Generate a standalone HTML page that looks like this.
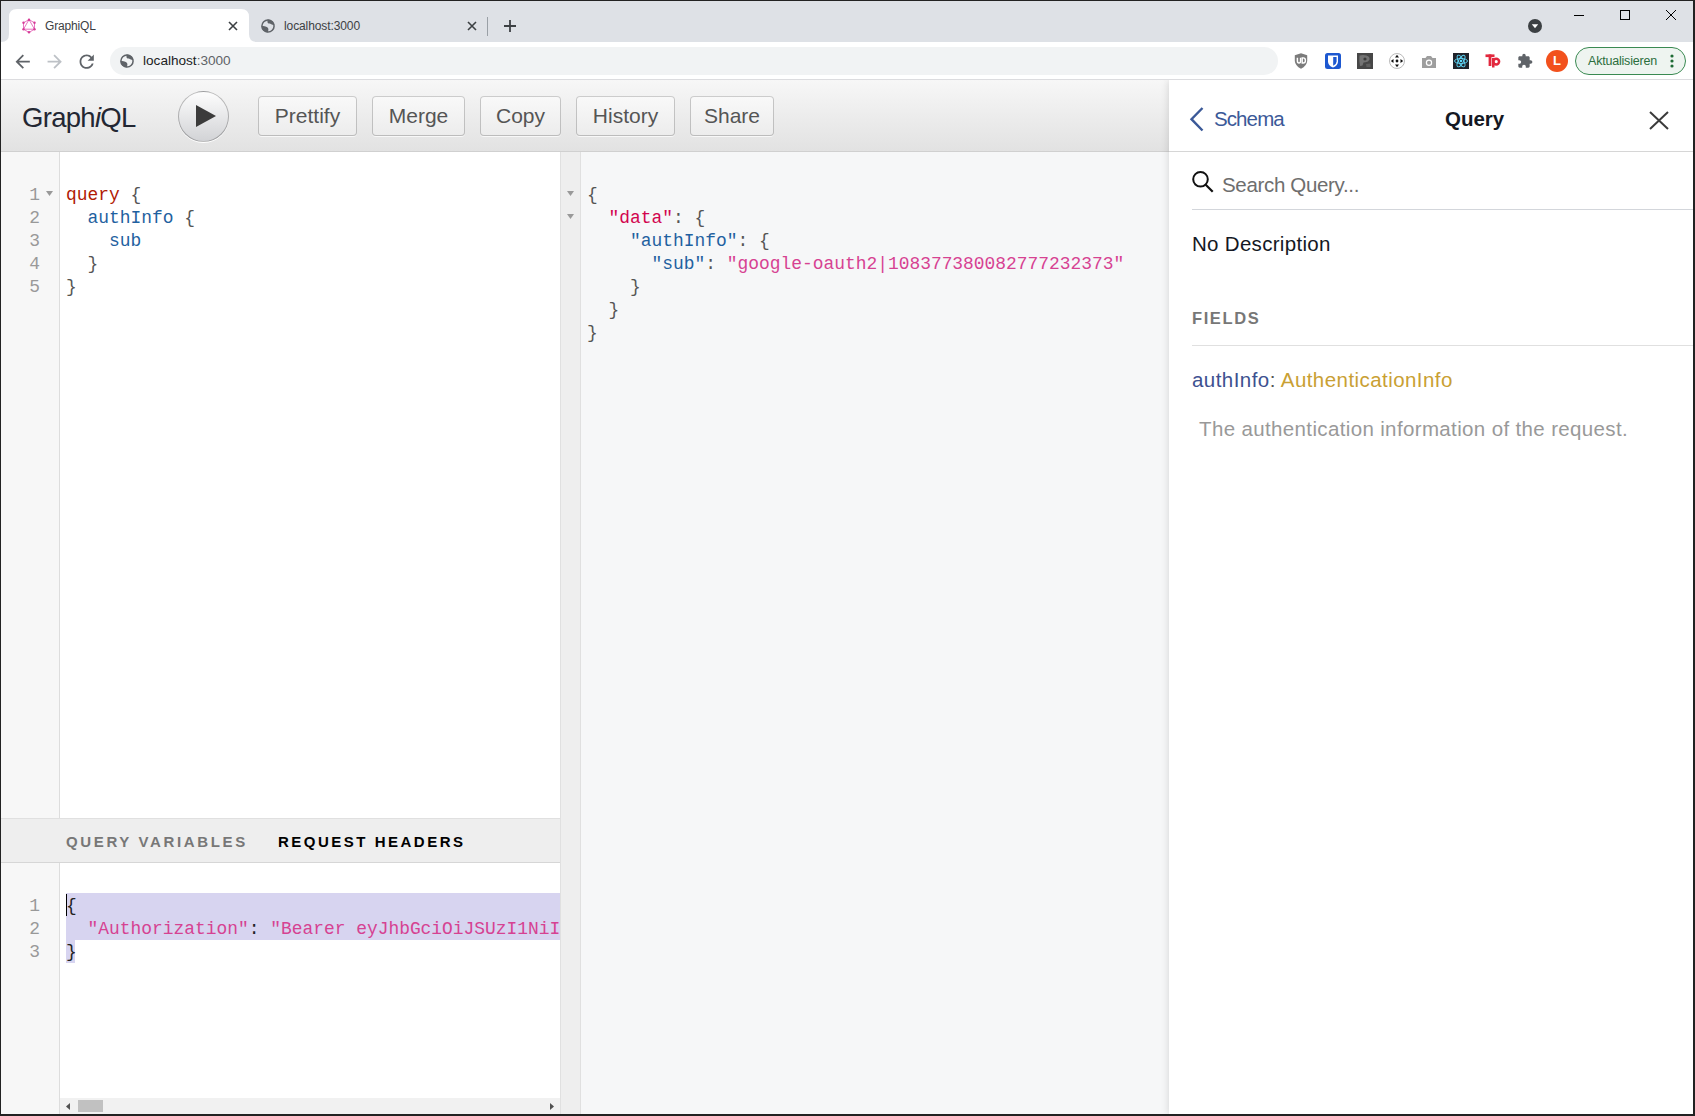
<!DOCTYPE html>
<html><head><meta charset="utf-8">
<style>
*{box-sizing:border-box;margin:0;padding:0}
html,body{width:1695px;height:1116px;overflow:hidden;background:#fff;font-family:"Liberation Sans",sans-serif}
.abs{position:absolute}
#win{position:absolute;left:0;top:0;width:1695px;height:1116px;border:1px solid #222;border-right-width:2px;border-bottom-width:2px;z-index:50;pointer-events:none}
#tabstrip{position:absolute;left:1px;top:1px;width:1692px;height:41px;background:#dee1e6}
#toolbar{position:absolute;left:1px;top:42px;width:1692px;height:38px;background:#fff;border-bottom:1px solid #dcdcdf}
.mono{font-family:"Liberation Mono",monospace}
#topbar{position:absolute;left:1px;top:80px;width:1168px;height:72px;background:linear-gradient(#f7f7f7,#e2e2e2);border-bottom:1px solid #d0d0d0}
.btn{position:absolute;top:96px;height:40px;border-radius:4px;background:linear-gradient(#f9f9f9,#ececec);box-shadow:inset 0 0 0 1px rgba(0,0,0,0.2),0 1px 0 rgba(255,255,255,0.7),inset 0 1px #fff;color:#555;font-size:21px;line-height:40px;text-align:center}
#qgut{position:absolute;left:1px;top:152px;width:59px;height:666px;background:#f7f7f7;border-right:1px solid #ddd}
#qed{position:absolute;left:60px;top:152px;width:500px;height:666px;background:#fff}
#vtitle{position:absolute;left:1px;top:818px;width:559px;height:45px;background:#eee;border-top:1px solid #e0e0e0;border-bottom:1px solid #d6d6d6}
#vgut{position:absolute;left:1px;top:863px;width:59px;height:252px;background:#f7f7f7;border-right:1px solid #ddd}
#ved{position:absolute;left:60px;top:863px;width:500px;height:252px;background:#fff}
#rgut{position:absolute;left:560px;top:152px;width:21px;height:963px;background:#eee;border-left:1px solid #e0e0e0;border-right:1px solid #e0e0e0}
#res{position:absolute;left:581px;top:152px;width:588px;height:963px;background:#f6f7f8}
#doc{position:absolute;left:1169px;top:80px;width:524px;height:1035px;background:#fff;box-shadow:0 0 8px rgba(0,0,0,0.15);clip-path:inset(0 0 0 -20px)}
.code{position:absolute;font-family:"Liberation Mono",monospace;font-size:17.92px;line-height:23px;white-space:pre;color:#555}
.ln{position:absolute;font-family:"Liberation Mono",monospace;font-size:17.92px;line-height:23px;color:#999;text-align:right;width:40px;white-space:pre}
.vt{font-size:15px;font-weight:bold;letter-spacing:2.5px;line-height:20px;white-space:nowrap}
.dt{font-size:20.5px;line-height:24px;white-space:nowrap}
.kw{color:#B11A04}.pr{color:#1F61A0}.df{color:#D2054E}.st{color:#D64292}
</style></head><body>
<div id="win"></div>
<div id="tabstrip"></div>
<!-- active tab -->
<svg class="abs" style="left:0px;top:0px" width="260" height="43">
<path d="M1 42 Q9 42 9 34 L9 17 Q9 9 17 9 L241 9 Q249 9 249 17 L249 34 Q249 42 257 42 Z" fill="#fff"/>
</svg>
<svg class="abs" style="left:21px;top:18px" width="16" height="16" viewBox="0 0 16 16">
<g fill="none" stroke="#e040a8" stroke-width="0.8" opacity="0.9">
<polygon points="8,1.6 13.5,4.8 13.5,11.2 8,14.4 2.5,11.2 2.5,4.8"/>
<polygon points="8,1.6 13.5,11.2 2.5,11.2"/>
</g>
<g fill="#d63c98"><circle cx="8" cy="1.8" r="1.2"/><circle cx="13.5" cy="4.8" r="1.2"/><circle cx="13.5" cy="11.2" r="1.2"/><circle cx="8" cy="14.2" r="1.2"/><circle cx="2.5" cy="11.2" r="1.2"/><circle cx="2.5" cy="4.8" r="1.2"/></g>
</svg>
<div class="abs" style="left:45px;top:18px;font-size:12px;letter-spacing:-0.15px;color:#3c4043;line-height:16px">GraphiQL</div>
<svg class="abs" style="left:228px;top:21px" width="10" height="10"><path d="M1 1L9 9M9 1L1 9" stroke="#3c4043" stroke-width="1.6"/></svg>
<!-- tab 2 -->
<svg class="abs" style="left:261px;top:19px" width="14" height="14" viewBox="0 0 14 14"><defs><clipPath id="gc1"><circle cx="7" cy="7" r="6.5"/></clipPath></defs><circle cx="7" cy="7" r="6.1" fill="#dee1e6" stroke="#5f6368" stroke-width="1.5"/><g clip-path="url(#gc1)" fill="#5f6368"><path d="M6.4 0 C6.8 1.6 6 3 6.9 4.1 C7.8 5.1 9.6 5 10.8 5.5 C11.8 5.9 12.8 6.1 14 6.1 L14 0 Z"/><path d="M0 7.3 C1.6 7 3.6 7 5.2 7.7 C6.6 8.3 7.4 9.2 7.4 10.4 C7.4 11.6 6.8 12.6 6.8 14 L0 14 Z"/></g></svg>
<div class="abs" style="left:284px;top:18px;font-size:12px;letter-spacing:-0.1px;color:#3c4043;line-height:16px">localhost:3000</div>
<svg class="abs" style="left:467px;top:21px" width="10" height="10"><path d="M1 1L9 9M9 1L1 9" stroke="#3c4043" stroke-width="1.6"/></svg>
<div class="abs" style="left:487px;top:17px;width:1px;height:19px;background:#9aa0a6"></div>
<svg class="abs" style="left:503px;top:19px" width="14" height="14"><path d="M7 1V13M1 7H13" stroke="#3c4043" stroke-width="1.8"/></svg>
<!-- window controls -->
<svg class="abs" style="left:1527px;top:18px" width="16" height="16"><circle cx="8" cy="8" r="7" fill="#3c4043"/><path d="M4.8 6.3 L11.2 6.3 L8 10.2Z" fill="#fff"/></svg>
<div class="abs" style="left:1574px;top:15px;width:10px;height:1px;background:#000"></div>
<div class="abs" style="left:1620px;top:10px;width:10px;height:10px;border:1px solid #000"></div>
<svg class="abs" style="left:1665px;top:9px" width="12" height="12"><path d="M1 1L11 11M11 1L1 11" stroke="#000" stroke-width="1"/></svg>

<div id="toolbar"></div>
<svg class="abs" style="left:12.4px;top:50.7px" width="21.4" height="21.4" viewBox="0 0 24 24"><path d="M20 11H7.83l5.59-5.59L12 4l-8 8 8 8 1.41-1.41L7.83 13H20v-2z" fill="#5f6368"/></svg>
<svg class="abs" style="left:44.4px;top:50.7px" width="21.4" height="21.4" viewBox="0 0 24 24"><path d="M12 4l-1.41 1.41L16.17 11H4v2h12.17l-5.58 5.59L12 20l8-8z" fill="#bdc1c6"/></svg>
<svg class="abs" style="left:76.4px;top:50.7px" width="21.4" height="21.4" viewBox="0 0 24 24"><path d="M17.65 6.35C16.2 4.9 14.21 4 12 4c-4.42 0-7.99 3.58-7.99 8s3.57 8 7.99 8c3.73 0 6.84-2.55 7.73-6h-2.08c-.82 2.33-3.04 4-5.65 4-3.31 0-6-2.69-6-6s2.69-6 6-6c1.66 0 3.14.69 4.22 1.78L13 11h7V4l-2.35 2.35z" fill="#5f6368"/></svg>
<div class="abs" style="left:110px;top:47px;width:1168px;height:28px;border-radius:14px;background:#f1f3f4"></div>
<svg class="abs" style="left:120px;top:54px" width="14" height="14" viewBox="0 0 14 14"><defs><clipPath id="gc2"><circle cx="7" cy="7" r="6.5"/></clipPath></defs><circle cx="7" cy="7" r="6.1" fill="#f1f3f4" stroke="#5f6368" stroke-width="1.5"/><g clip-path="url(#gc2)" fill="#5f6368"><path d="M6.4 0 C6.8 1.6 6 3 6.9 4.1 C7.8 5.1 9.6 5 10.8 5.5 C11.8 5.9 12.8 6.1 14 6.1 L14 0 Z"/><path d="M0 7.3 C1.6 7 3.6 7 5.2 7.7 C6.6 8.3 7.4 9.2 7.4 10.4 C7.4 11.6 6.8 12.6 6.8 14 L0 14 Z"/></g></svg>
<div class="abs" style="left:143px;top:52px;font-size:13.6px;color:#202124;line-height:18px">localhost<span style="color:#5f6368">:3000</span></div>
<!-- extensions -->
<svg class="abs" style="left:1293px;top:53px" width="16" height="16" viewBox="0 0 16 16"><path d="M8 0.3 L14.2 2.2 L14.2 8 Q13.8 12.8 8 15.8 Q2.2 12.8 1.8 8 L1.8 2.2Z" fill="#7b7b7b"/><path d="M4.4 4.8 V8 Q4.4 10 6 10 Q7.6 10 7.6 8 V4.8" fill="none" stroke="#fff" stroke-width="1.5"/><path d="M9.2 4.9 H10.2 Q12.4 4.9 12.4 7.45 Q12.4 10 10.2 10 H9.2Z" fill="none" stroke="#fff" stroke-width="1.4"/></svg>
<svg class="abs" style="left:1325px;top:53px" width="16" height="16" viewBox="0 0 16 16"><rect x="0" y="0" width="16" height="16" rx="2.5" fill="#1d58d0"/><path d="M3 2.6 H13 V8.4 Q13 12.2 8 14.6 Q3 12.2 3 8.4Z" fill="#fff"/><path d="M8.2 4 H11.6 V8.4 Q11.6 10.9 8.2 12.8Z" fill="#1d58d0"/></svg>
<svg class="abs" style="left:1357px;top:53px" width="16" height="16" viewBox="0 0 16 16"><rect width="16" height="16" fill="#474747"/><path d="M2.5 2.5 Q6 1.5 9.5 2.5 Q13 3.5 12.5 6.5 Q11.5 9 8.5 9.2 L6.5 9.5 L5.5 12.5 L3 13 Q2 8 2.5 2.5Z" fill="#7e7e7e" opacity="0.8"/><circle cx="8" cy="6" r="1.6" fill="#3a3a3a"/><path d="M9 11 L13.5 10.5 L13.5 14 L9.5 14Z" fill="#6a6a6a" opacity="0.7"/></svg>
<svg class="abs" style="left:1389px;top:53px" width="16" height="16" viewBox="0 0 16 16"><circle cx="8" cy="8" r="7.5" fill="#fff" stroke="#bbb" stroke-width="1"/><path d="M8 1.8 L10 4.5 H6Z M8 14.2 L10 11.5 H6Z M1.8 8 L4.5 6 V10Z M14.2 8 L11.5 6 V10Z" fill="#111"/><circle cx="8" cy="8" r="1.4" fill="#111"/></svg>
<svg class="abs" style="left:1421px;top:54px" width="16" height="16" viewBox="0 0 16 16"><path d="M1 4 H4.5 L6 2 H10 L11.5 4 H15 V14 H1Z" fill="#9e9e9e"/><circle cx="8" cy="8.8" r="3.2" fill="#fff"/><circle cx="8" cy="8.8" r="2" fill="#9e9e9e"/></svg>
<svg class="abs" style="left:1453px;top:53px" width="16" height="16" viewBox="0 0 16 16"><rect width="16" height="16" fill="#20232a"/><g fill="none" stroke="#61dafb" stroke-width="0.9"><ellipse cx="8" cy="8" rx="6.5" ry="2.5"/><ellipse cx="8" cy="8" rx="6.5" ry="2.5" transform="rotate(60 8 8)"/><ellipse cx="8" cy="8" rx="6.5" ry="2.5" transform="rotate(120 8 8)"/></g><circle cx="8" cy="8" r="1.3" fill="#61dafb"/></svg>
<svg class="abs" style="left:1484px;top:53px" width="18" height="16"><g fill="#e2283e"><rect x="1.5" y="1.4" width="9" height="2.7"/><rect x="4.6" y="1.4" width="2.8" height="11.6"/><rect x="8" y="5" width="2.5" height="9.5"/></g><circle cx="12.2" cy="8.6" r="2.9" fill="none" stroke="#e2283e" stroke-width="2.5"/></svg>
<svg class="abs" style="left:1517px;top:53px" width="16" height="16" viewBox="0 0 24 24"><path d="M20.5 11H19V7c0-1.1-.9-2-2-2h-4V3.5C13 2.12 11.88 1 10.5 1S8 2.12 8 3.5V5H4c-1.1 0-2 .9-2 2v3.8h1.5c1.49 0 2.7 1.21 2.7 2.7s-1.21 2.7-2.7 2.7H2V20c0 1.1.9 2 2 2h3.8v-1.5c0-1.49 1.21-2.7 2.7-2.7 1.49 0 2.7 1.21 2.7 2.7V22H17c1.1 0 2-.9 2-2v-4h1.5c1.38 0 2.5-1.12 2.5-2.5S21.88 11 20.5 11z" fill="#5f6368"/></svg>
<div class="abs" style="left:1546px;top:50px;width:22px;height:22px;border-radius:50%;background:#f2511d;color:#fff;font-size:13px;font-weight:bold;line-height:22px;text-align:center">L</div>
<div class="abs" style="left:1575px;top:47px;width:111px;height:28px;border-radius:14px;border:1px solid #3a8a52;background:#eef4f0"></div>
<div class="abs" style="left:1588px;top:52px;font-size:12.5px;letter-spacing:-0.2px;color:#2b6e3c;line-height:18px">Aktualisieren</div>
<svg class="abs" style="left:1669px;top:53px" width="6" height="16"><circle cx="3" cy="3" r="1.6" fill="#1e6b34"/><circle cx="3" cy="8" r="1.6" fill="#1e6b34"/><circle cx="3" cy="13" r="1.6" fill="#1e6b34"/></svg>

<div id="topbar"></div>
<div class="abs" style="left:22px;top:102px;font-size:27.5px;letter-spacing:-0.7px;color:#232733">Graph<i>i</i>QL</div>
<div class="abs" style="left:178px;top:91px;width:51px;height:51px;border-radius:50%;background:linear-gradient(#fdfdfd,#d2d3d6);border:1px solid rgba(0,0,0,0.25);box-shadow:0 1px 0 #fff"></div>
<svg class="abs" style="left:196px;top:105px" width="21" height="23"><path d="M0 0 L20 11 L0 22Z" fill="#3b3b3b"/></svg>
<div class="btn" style="left:258px;width:99px">Prettify</div>
<div class="btn" style="left:372px;width:93px">Merge</div>
<div class="btn" style="left:480px;width:81px">Copy</div>
<div class="btn" style="left:576px;width:99px">History</div>
<div class="btn" style="left:690px;width:84px">Share</div>

<div id="qgut"></div>
<div id="qed"></div>
<div class="ln" style="left:0px;top:184px">1
2
3
4
5</div>
<div class="code" style="left:66px;top:184px"><span class="kw">query</span> {
  <span class="pr">authInfo</span> {
    <span class="pr">sub</span>
  }
}</div>

<svg class="abs" style="left:46px;top:191px" width="8" height="6"><path d="M0 0H7L3.5 5Z" fill="#999"/></svg>
<div id="vtitle"></div>
<div class="abs vt" style="left:66px;top:832px;color:#777;letter-spacing:2.64px">QUERY VARIABLES</div>
<div class="abs vt" style="left:278px;top:832px;color:#000">REQUEST HEADERS</div>
<div id="vgut"></div>
<div id="ved"></div>
<div class="abs" style="left:66px;top:893px;width:494px;height:47px;background:#d7d4f0"></div>
<div class="abs" style="left:66px;top:940px;width:9px;height:23px;background:#d7d4f0"></div>
<div class="abs" style="left:66px;top:894px;width:1px;height:22px;background:#000"></div>
<div class="ln" style="left:0px;top:895px">1
2
3</div>
<div class="code" style="left:66px;top:895px;width:494px;overflow:hidden;color:#222">{
  <span class="st">"Authorization"</span>: <span class="st">"Bearer eyJhbGciOiJSUzI1NiIsInR5cCI6IkpXVCJ9"</span>
}</div>
<div class="abs" style="left:60px;top:1098px;width:500px;height:17px;background:#f1f1f1"></div>
<svg class="abs" style="left:66px;top:1103px" width="5" height="8"><path d="M4 0V7L0 3.5Z" fill="#505050"/></svg>
<div class="abs" style="left:78px;top:1100px;width:25px;height:12px;background:#c1c1c1"></div>
<svg class="abs" style="left:550px;top:1103px" width="5" height="8"><path d="M0 0V7L4 3.5Z" fill="#505050"/></svg>

<div id="rgut"></div>
<div id="res"></div>
<svg class="abs" style="left:567px;top:191px" width="8" height="6"><path d="M0 0H7L3.5 5Z" fill="#999"/></svg>
<svg class="abs" style="left:567px;top:214px" width="8" height="6"><path d="M0 0H7L3.5 5Z" fill="#999"/></svg>
<div class="code" style="left:587px;top:184px">{
  <span class="df">"data"</span>: {
    <span class="pr">"authInfo"</span>: {
      <span class="pr">"sub"</span>: <span class="st">"google-oauth2|108377380082777232373"</span>
    }
  }
}</div>

<div id="doc"></div>
<div class="abs" style="left:1169px;top:151px;width:524px;height:1px;background:#d6d6d6"></div>
<svg class="abs" style="left:1188px;top:106px" width="18" height="27"><path d="M14.5 2 L3.5 13.2 L14.5 24.5" fill="none" stroke="#3B5998" stroke-width="2.4"/></svg>
<div class="abs dt" style="left:1214px;top:107px;color:#3B5998;letter-spacing:-0.9px">Schema</div>
<div class="abs dt" style="left:1445px;top:107px;color:#141823;font-weight:bold">Query</div>
<svg class="abs" style="left:1648px;top:110px" width="22" height="21"><path d="M2 2 L20 19 M20 2 L2 19" stroke="#3b3b3b" stroke-width="2"/></svg>
<svg class="abs" style="left:1190px;top:169px" width="26" height="26"><circle cx="10.5" cy="10.3" r="7.3" fill="none" stroke="#111" stroke-width="2"/><path d="M15.7 15.7 L22.7 22.7" stroke="#111" stroke-width="2.2"/></svg>
<div class="abs dt" style="left:1222px;top:173px;color:#6e6e6e;letter-spacing:-0.33px">Search Query...</div>
<div class="abs" style="left:1192px;top:209px;width:501px;height:1px;background:#d3d6db"></div>
<div class="abs dt" style="left:1192px;top:232px;color:#141823;letter-spacing:0.3px">No Description</div>
<div class="abs vt" style="left:1192px;top:308px;color:#777;font-size:16.5px;letter-spacing:1.6px">FIELDS</div>
<div class="abs" style="left:1192px;top:345px;width:501px;height:1px;background:#e0e0e0"></div>
<div class="abs dt" style="left:1192px;top:368px;letter-spacing:0.44px"><span style="color:#3d5190">authInfo</span><span style="color:#555">: </span><span style="color:#c9a033">AuthenticationInfo</span></div>
<div class="abs dt" style="left:1199px;top:417px;color:#999;letter-spacing:0.36px">The authentication information of the request.</div>
</body></html>
